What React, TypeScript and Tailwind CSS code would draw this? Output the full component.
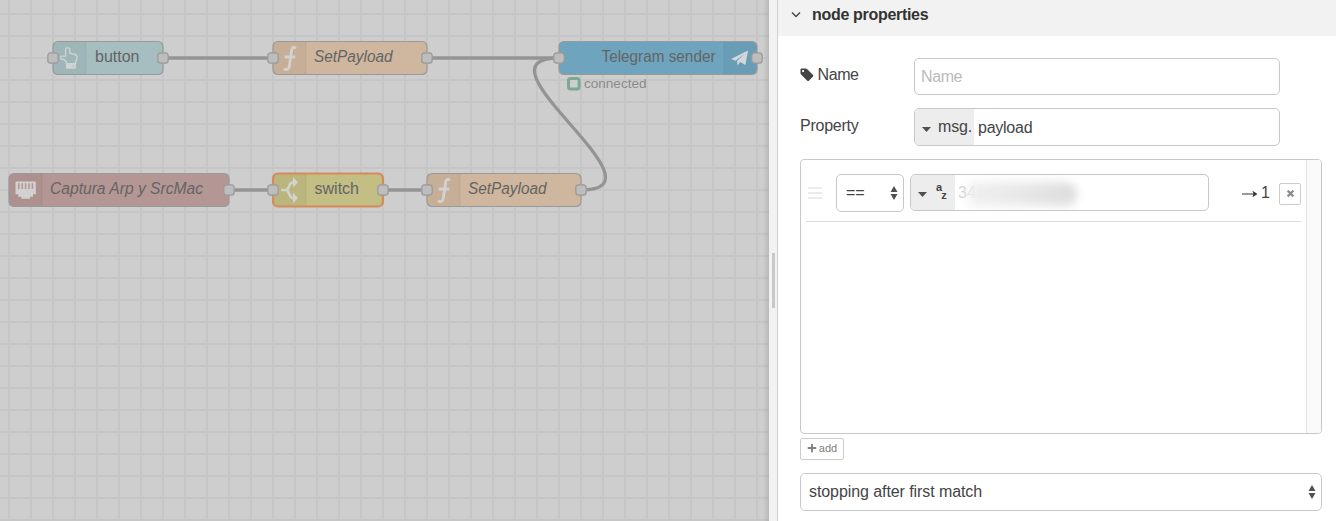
import { FaPlus, FaTimes } from "react-icons/fa";

type FlowNode = {
  x: number;
  y: number;
  w: number;
  label: string;
  labelX: number;
  labelW: number;
  fill: string;
  italic?: boolean;
  selected?: boolean;
  iconRight?: boolean;
  input?: boolean;
  icon: "hand" | "function" | "plane" | "ethernet" | "split";
};

const nodes: FlowNode[] = [
  { x: 53, y: 41.5, w: 110, label: "button", labelX: 95, labelW: 44.5, fill: "#a6bec0", icon: "hand", input: true },
  { x: 273, y: 41.5, w: 154, label: "SetPayload", labelX: 314, labelW: 78.5, fill: "#cfb69e", italic: true, icon: "function", input: true },
  { x: 559, y: 41.5, w: 198, label: "Telegram sender", labelX: 601.5, labelW: 114, fill: "#6ea4be", icon: "plane", iconRight: true, input: true },
  { x: 9, y: 173.5, w: 220, label: "Captura Arp y SrcMac", labelX: 50, labelW: 153, fill: "#b49795", italic: true, icon: "ethernet" },
  { x: 273, y: 173.5, w: 110, label: "switch", labelX: 314.5, labelW: 44.5, fill: "#c2be84", icon: "split", selected: true, input: true },
  { x: 427, y: 173.5, w: 154, label: "SetPayload", labelX: 468, labelW: 78.5, fill: "#cfb69e", italic: true, icon: "function", input: true },
];

const wires = [
  "M163 58H273",
  "M427 58H559",
  "M229 190H273",
  "M383 190H427",
  "M581 190C674 190 466 58 559 58",
];

function NodeIcon({ kind }: { kind: FlowNode["icon"] }) {
  switch (kind) {
    case "hand":
      return (
        <g fill="none" stroke="#d0d4d4" strokeWidth="1.300" strokeLinejoin="round">
          <path d="M13.600 22.200C13.600 20 12.200 18.600 10.500 17.800H9C7.200 17.500 6.900 14.900 8.700 14.600H12.600V8C12.600 5.400 16.800 5.400 16.800 8V12.300C18 11.500 19.200 11.900 19.700 12.700C21 12.100 22 12.700 22.200 13.600C23.600 13.200 24 14.200 24 15.500C24 18.500 22.500 19.500 22.500 22.200Z" />
          <path d="M13.600 22.600H22.200V26.600H13.600Z" fill="#d0d4d4" />
          <circle cx="20.300" cy="24.600" r="0.800" fill="#a6bec0" stroke="none" />
        </g>
      );
    case "function":
      return (
        <path
          d="M22.600 7.200C21.800 5.200 19.300 5.200 18.700 8.300L16.300 25C15.900 28.200 13 28.800 11 27.100M11.500 15.500H22.300"
          fill="none"
          stroke="#d4d2d0"
          strokeWidth="2.800"
        />
      );
    case "plane":
      return <path d="M7 17.5L24 9L21.400 23.500L16.200 20.600L13.600 23.800L13 19.500L21 12L11.500 19.200Z" fill="#d4d7d9" />;
    case "ethernet":
      return (
        <g>
          <path d="M6.500 8H26.800V20.700H24V23.200H21V25.300H12.300V23.200H9.300V20.700H6.500Z" fill="#d2d0d0" />
          <path d="M9.800 9.800V15.500M13.200 9.800V15.500M16.600 9.800V15.500M20 9.800V15.500M23.400 9.800V15.500" stroke="#b49795" strokeWidth="1.500" />
        </g>
      );
    case "split":
      return (
        <g>
          <path d="M8.300 16.500H14M21 9H19.500C16.500 9 16.500 13.500 14 16.500C16.500 19.500 16.500 24.500 19.500 24.500H21" fill="none" stroke="#d3d3cd" strokeWidth="2.600" />
          <path d="M20 3.500L25 8.700L20 14ZM20 19.200L25 24.500L20 29.700Z" fill="#d3d3cd" />
        </g>
      );
  }
}

function Port({ x, y }: { x: number; y: number }) {
  return <rect x={x - 5.2} y={y - 5.2} width="10.400" height="10.400" rx="3" fill="#bdbdbd" stroke="#999" strokeWidth="1.200" />;
}

function Workspace() {
  return (
    <main className="relative h-full w-[769px] shrink-0 overflow-hidden bg-[#cecece]">
      <svg width="769" height="521" className="block" fontFamily="'Liberation Sans', Arial, sans-serif">
        <defs>
          <pattern id="grid" x="8" y="13" width="22" height="22" patternUnits="userSpaceOnUse">
            <path d="M1 0V22M0 1H22" stroke="#c6c6c6" strokeWidth="2" />
          </pattern>
        </defs>
        <rect width="769" height="521" fill="url(#grid)" />
        {wires.map((d) => (
          <path key={d} d={d} fill="none" stroke="#949494" strokeWidth="3.300" />
        ))}
        {nodes.map((n) => (
          <g key={`${n.x}-${n.y}`}>
            <rect x={n.x} y={n.y} width={n.w} height="33" rx="5" fill={n.fill} />
            <g transform={`translate(${n.iconRight ? n.x + n.w - 33 : n.x} ${n.y})`}>
              <path
                d={n.iconRight ? "M0 0H28Q33 0 33 5V28Q33 33 28 33H0Z" : "M33 0H5Q0 0 0 5V28Q0 33 5 33H33Z"}
                fill="#000"
                fillOpacity="0.040"
              />
              <path d={n.iconRight ? "M0 0V33" : "M33 0V33"} stroke="#000" strokeOpacity="0.060" />
              <NodeIcon kind={n.icon} />
            </g>
            <rect
              x={n.x}
              y={n.y}
              width={n.w}
              height="33"
              rx="5"
              fill="none"
              stroke={n.selected ? "#d68a5c" : "#999"}
              strokeWidth={n.selected ? 2.2 : 1.2}
            />
            <text
              x={n.labelX}
              y={n.y + 20.5}
              textLength={n.labelW}
              lengthAdjust="spacingAndGlyphs"
              fontSize="16"
              fontStyle={n.italic ? "italic" : "normal"}
              fill="#646464"
            >
              {n.label}
            </text>
            {n.input && <Port x={n.x} y={n.y + 16.5} />}
            <Port x={n.x + n.w} y={n.y + 16.5} />
          </g>
        ))}
        <rect x="568.500" y="78.500" width="10.600" height="10.600" rx="2" fill="#cecece" stroke="#7aaa94" strokeWidth="3" />
        <text x="584" y="88" fontSize="13.400" textLength="62.500" lengthAdjust="spacingAndGlyphs" fill="#8b8b8b">
          connected
        </text>
      </svg>
      <div className="absolute inset-y-0 right-0 w-1.5 bg-linear-to-r from-transparent to-black/10" />
    </main>
  );
}

function SelectArrows() {
  return (
    <svg width="8" height="14" viewBox="0 0 8 14" fill="#505050">
      <path d="M4 0L7.500 6H0.500ZM4 14L7.500 8H0.500Z" />
    </svg>
  );
}

function Caret() {
  return (
    <svg width="9" height="5" viewBox="0 0 9 5" fill="#505050">
      <path d="M0 0H9L4.500 5Z" />
    </svg>
  );
}

function RuleRow() {
  return (
    <div className="ml-[5px] flex h-[62px] w-[495px] items-start border-b border-[#dcdcdc] pt-[14px]">
      <div className="mt-[13px] ml-[2px] flex w-[14px] flex-col gap-[3px]">
        <span className="h-[2px] bg-[#ebebeb]" />
        <span className="h-[2px] bg-[#ebebeb]" />
        <span className="h-[2px] bg-[#ebebeb]" />
      </div>
      <div className="ml-[14px] flex h-[38px] w-[68px] items-center justify-between rounded-[5px] border border-[#c8c8c8] pr-[5px] pl-[9px]">
        <span>==</span>
        <SelectArrows />
      </div>
      <div className="ml-[6px] flex h-[37px] w-[299px] overflow-hidden rounded-[5px] border border-[#c8c8c8]">
        <div className="flex w-[44px] shrink-0 items-center bg-[#ededed] pl-[7px]">
          <span className="mt-[4px] flex"><Caret /></span>
          <div className="ml-[9px] flex text-[11px] leading-[11px] font-bold">
            <span className="-mt-[3px]">a</span>
            <span className="mt-[5px] -ml-px">z</span>
          </div>
        </div>
        <div className="relative flex-1 pl-[3px] text-[#d5d5d5]">
          <span className="leading-[36px]">34</span>
          <div className="absolute top-[7px] left-[14px] h-[24px] w-[108px] rounded-r-full bg-linear-to-r from-[#f0f0f0] via-[#e8e8e8] to-[#dcdcdc] blur-[5px]" />
        </div>
      </div>
      <div className="ml-[33px] flex h-[38px] w-[28px] items-center justify-between">
        <svg width="16" height="8" viewBox="0 0 16 8" className="mt-[1px]" fill="none" stroke="#333" strokeWidth="1.200">
          <path d="M0 4H14" />
          <path d="M10.500 0.800L15.500 4L10.500 7.200L11.500 4Z" fill="#333" stroke="none" />
        </svg>
        <span>1</span>
      </div>
      <button className="mt-[9px] ml-auto flex h-[22px] w-[22px] items-center justify-center rounded-[2px] border border-[#ccc] pb-px text-[#888]">
        <FaTimes size={9} strokeWidth={50} stroke="#888" />
      </button>
    </div>
  );
}

export default function App() {
  return (
    <div className="flex h-[521px] w-[1336px] overflow-hidden bg-white font-['Liberation_Sans',Arial,sans-serif] text-[16px] leading-[20px] text-[#444]">
      <Workspace />
      <div className="flex h-full w-[9px] shrink-0 items-start border-r border-[#cfcfcf] bg-[#f2f2f2] pt-[253px] pl-[3px]">
        <div className="h-[55px] w-[3px] bg-[#c8c8c8]" />
      </div>
      <section className="flex min-w-0 flex-1 flex-col">
        <header className="flex h-[36px] shrink-0 items-center bg-[#f2f2f2] pb-[6px] pl-[13px] font-bold text-[#333]">
          <svg width="10" height="6" viewBox="0 0 10 6" fill="none" stroke="#444" strokeWidth="1.400">
            <path d="M1 0.500L5 4.500L9 0.500" />
          </svg>
          <h2 className="ml-[11px] tracking-[-0.31px]">node properties</h2>
        </header>
        <div className="flex flex-col items-start pt-[22px] pl-[22px]">
          <div className="flex h-[37px] w-[480px] items-center">
            <label className="flex w-[114px] items-center gap-[3.5px] pb-[3px] tracking-[-0.4px]">
              <svg width="14" height="14" viewBox="0 0 14 14" fill="#444" className="shrink-0">
                <path
                  fillRule="evenodd"
                  d="M1.500 0.500H5.600Q6.600 0.500 7.300 1.200L13 7Q13.800 7.800 13 8.600L8.900 12.700Q8.100 13.500 7.300 12.700L1.300 6.700Q0.500 6 0.500 5V1.500Q0.500 0.500 1.500 0.500ZM3.100 2A1.100 1.100 0 1 0 3.100 4.200A1.100 1.100 0 1 0 3.100 2Z"
                />
              </svg>
              Name
            </label>
            <input
              placeholder="Name"
              className="h-[37px] w-[366px] rounded-[5px] border border-[#c8c8c8] px-[6px] tracking-[-0.4px] outline-none placeholder:text-[#bbb]"
            />
          </div>
          <div className="mt-[13px] flex h-[38px] w-[480px] items-center">
            <label className="w-[114px] pb-[3px] tracking-[-0.25px]">Property</label>
            <div className="flex h-[38px] w-[366px] overflow-hidden rounded-[5px] border border-[#c8c8c8]">
              <div className="flex w-[59px] items-center bg-[#ededed] pl-[7px]">
                <span className="mt-[5px] flex"><Caret /></span>
                <span className="ml-[7px] tracking-[-0.2px]">msg.</span>
              </div>
              <span className="pl-[4px] leading-[38px] tracking-[-0.25px]">payload</span>
            </div>
          </div>
          <div className="mt-[13px] flex h-[275px] w-[522px] justify-between overflow-hidden rounded-[4px] border border-[#c8c8c8]">
            <RuleRow />
            <div className="w-[15px] border-l border-[#e6e6e6] bg-[#fafafa]" />
          </div>
          <button className="mt-[4px] flex h-[22px] w-[44px] items-center justify-center gap-[2px] rounded-[2px] border border-[#ccc] pb-[2px] text-[11px] text-[#808080]">
            <FaPlus size={10} />
            add
          </button>
          <div className="mt-[13px] flex h-[38px] w-[522px] items-center justify-between rounded-[5px] border border-[#c8c8c8] pr-[5px] pl-[8px]">
            <span className="tracking-[-0.08px]">stopping after first match</span>
            <SelectArrows />
          </div>
        </div>
      </section>
    </div>
  );
}
